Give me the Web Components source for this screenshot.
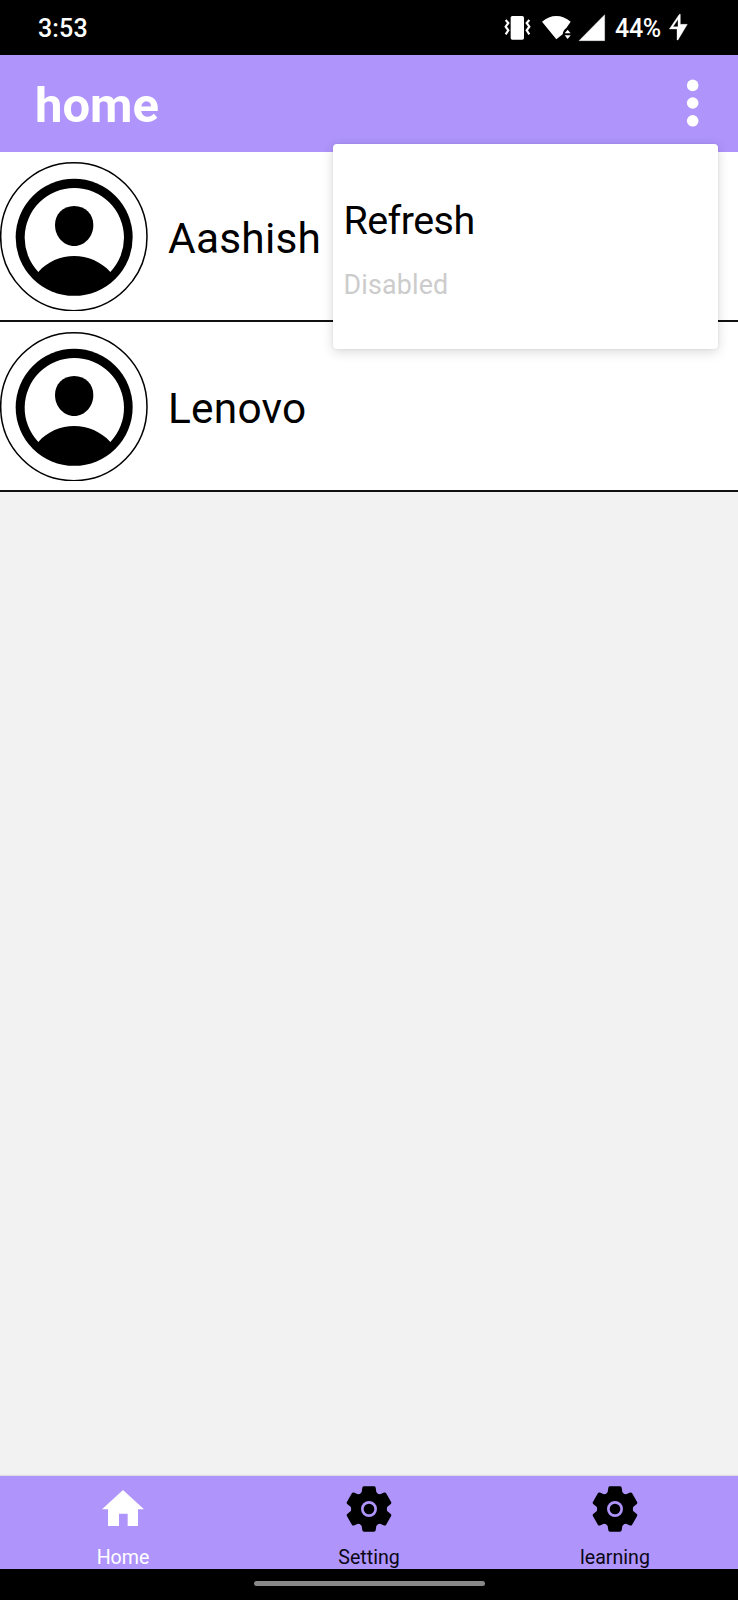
<!DOCTYPE html>
<html lang="en">
<head>
<meta charset="utf-8">
<title>home</title>
<style>
html,body{margin:0;height:100%}
body{font-family:Roboto,"Noto Sans",sans-serif;color:#000;background:#f2f2f2}
</style>
</head>
<body>
<phone-screen>
  <status-bar slot="top" time="3:53" battery="44%"></status-bar>
  <app-header slot="top">home</app-header>
  <contact-row>Aashish</contact-row>
  <contact-row>Lenovo</contact-row>
  <popup-menu slot="overlay"><menu-entry>Refresh</menu-entry><menu-entry disabled>Disabled</menu-entry></popup-menu>
  <tab-bar slot="bottom">
    <tab-item icon="home" active>Home</tab-item>
    <tab-item icon="gear">Setting</tab-item>
    <tab-item icon="gear">learning</tab-item>
  </tab-bar>
  <gesture-bar slot="bottom"></gesture-bar>
</phone-screen>
<script>
function define(name, render) {
  customElements.define(name, class extends HTMLElement {
    connectedCallback() {
      if (this.shadowRoot) return;
      this.attachShadow({ mode: 'open' }).innerHTML = render(this);
    }
  });
}

define('phone-screen', () => `
<style>
:host{display:flex;flex-direction:column;position:relative;width:738px;height:1600px;overflow:hidden;background:#f2f2f2;--accent:#ae94fb}
main{flex:1;min-height:0}
</style>
<slot name="top"></slot><main><slot></slot></main><slot name="bottom"></slot><slot name="overlay"></slot>`);

define('status-bar', el => `
<style>
:host{display:flex;justify-content:space-between;box-sizing:border-box;height:54.7px;flex:none;padding:0 48px 0 38px;background:#000;color:#fff;font-weight:500;font-size:25px;line-height:57px}
.right{display:flex}
svg{display:block;fill:#fff}
.bars{margin-right:1px}
.time{letter-spacing:.15px}
.pct{width:48px;white-space:nowrap;letter-spacing:-.3px}
</style>
<span class="time">${el.getAttribute('time')}</span>
<span class="right">
<svg class="bars" width="111" height="54" viewBox="39 0 333 162">
  <rect x="62" y="48" width="40" height="71" rx="5"/>
  <g fill="none" stroke="#fff" stroke-width="6.500"><path d="M47 60L55 69L47 80L55 91L47 103"/><path d="M118 60L110 69L118 80L110 91L118 103"/></g>
  <path d="M156 65Q176 48 199 48Q222 48 242 65L229 84Q219 91 218 103L199 118Z"/>
  <path d="M224 100L233 89L242 100ZM224 106L242 106L233 117Z"/>
  <path d="M344 44V122H267Z" stroke="#fff" stroke-width="1" stroke-linejoin="round"/>
</svg>
<span class="pct">${el.getAttribute('battery')}</span>
<svg width="27" height="54" viewBox="519 0 81 162"><path d="M568 43L538 87H561V120H564L592 73H571V43ZM564 58V80H549Z" fill-rule="evenodd" stroke="#fff" stroke-width="1" stroke-linejoin="round"/></svg>
</span>`);

define('app-header', () => `
<style>
:host{display:flex;justify-content:space-between;align-items:flex-start;box-sizing:border-box;height:97.6px;flex:none;padding:0 39px 0 35px;background:var(--accent);color:#fff;font-weight:700;font-size:49px;line-height:102px}
svg{display:block;margin-top:23px}
</style>
<span><slot></slot></span>
<svg width="13" height="50" fill="#fff"><circle cx="6.7" cy="7.4" r="5.8"/><circle cx="6.7" cy="25" r="5.8"/><circle cx="6.7" cy="42.8" r="5.8"/></svg>`);

define('contact-row', () => `
<style>
:host{display:flex;box-sizing:border-box;height:169.8px;padding-top:9px;background:#fff;border-bottom:2px solid #111;font-size:42.4px;letter-spacing:.25px;line-height:156px}
svg{display:block;flex:none;margin-right:20px}
</style>
<svg width="148" height="150" viewBox="0 33 444 450">
  <ellipse cx="221.500" cy="260" rx="219.500" ry="222" fill="#fff" stroke="#000" stroke-width="4.500"/>
  <circle cx="222.500" cy="262" r="175.500"/>
  <path fill="#fff" d="M115 366A149 149 0 1 1 331 366C304 335 262 318 222.500 318S141 335 115 366Z"/>
  <path d="M222.500 168C257 168 280 193 280 225C280 259 255 288 222.500 288S165 259 165 225C165 193 188 168 222.500 168Z"/>
</svg>
<span><slot></slot></span>`);

define('popup-menu', () => `
<style>
:host{position:absolute;left:333.4px;top:144px;width:384.6px;height:205.3px;box-sizing:border-box;padding:44.500px 10px 0;border-radius:4px;background:#fff;box-shadow:0 3px 12px rgba(0,0,0,.15),0 0 3px rgba(0,0,0,.08)}
</style><slot></slot>`);

define('menu-entry', () => `
<style>
:host{display:block;font-size:39.400px;letter-spacing:-.5px;line-height:64px}
:host([disabled]){font-size:26.800px;letter-spacing:.2px;line-height:64px;color:#ccc}
</style><slot></slot>`);

define('tab-bar', () => `
<style>
:host{display:grid;grid-template-columns:repeat(3,1fr);height:93.500px;flex:none;background:var(--accent);box-shadow:0 -1px 1px #ddd}
</style><slot></slot>`);

const tooth = [0,60,120,180,240,300].map(a => `<path transform="rotate(${a})" d="M-29 -42L-22 -51L-20 -64Q-19 -68 -15 -68H15Q19 -68 20 -64L22 -51L29 -42Z"/>`).join('');
const icons = {
  home: '<path fill="#fff" d="M0 -57L63 1H45V51H14V14H-12V51H-45V1H-63Z"/>',
  gear: `<circle r="53"/>${tooth}<circle r="20" fill="none" stroke="var(--accent)" stroke-width="8"/>`
};
define('tab-item', el => `
<style>
:host{display:flex;flex-direction:column;align-items:center;font-size:19.600px;line-height:24px;color:#0a0614}
:host([active]){color:#fff}
svg{display:block;margin-top:8.500px;margin-bottom:12px;fill:#000}
</style>
<svg width="50" height="50" viewBox="-75 -75 150 150">${icons[el.getAttribute('icon')]}</svg>
<span><slot></slot></span>`);

define('gesture-bar', () => `
<style>
:host{display:flex;justify-content:center;box-sizing:border-box;height:31px;flex:none;padding-top:12px;background:#000}
i{width:231px;height:5px;border-radius:3px;background:#888}
</style><i></i>`);
</script>
</body>
</html>
